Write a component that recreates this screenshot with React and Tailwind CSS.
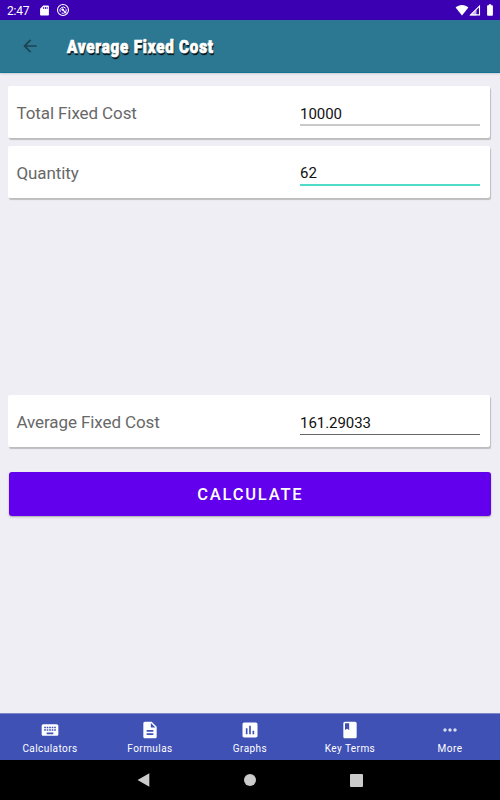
import React, { useState } from 'react';
import {
  MdKeyboard,
  MdDescription,
  MdAssessment,
  MdBook,
  MdMoreHoriz,
  MdArrowBack,
  MdBatteryFull,
} from 'react-icons/md';

const StatusBar = () => (
  <div className="flex h-5 shrink-0 items-center bg-[#3a00b2] pl-[7px] pr-[3px] text-white">
    <span className="w-[33px] pt-px text-[12px] leading-5 tracking-[-0.2px]">2:47</span>
    <svg viewBox="0 0 10 12" className="h-[11px] w-[9px]" fill="currentColor">
      <path
        fillRule="evenodd"
        d="M3.600.5H9a.9.9 0 0 1 .9.900V10.600a.9.9 0 0 1-.9.900H1a.9.9 0 0 1-.9-.900V4zM3.600 2.200V4.200H4.600V2.200zM5.500 2.200V4.200H6.500V2.200zM7.400 2.200V4.200H8.400V2.200z"
      />
    </svg>
    <svg viewBox="0 0 14 14" className="ml-[7px] h-[14px] w-[14px]" fill="none" stroke="currentColor">
      <circle cx="7" cy="7" r="5.5" strokeWidth="1.1" />
      <path d="M4.300 8.900A3.300 3.300 0 0 1 9.700 5.200M10.200 6.300A3.300 3.300 0 0 1 5.600 10" strokeWidth="1" />
      <path d="M6 6L10.400 10.400" strokeWidth="1.3" />
      <circle cx="6.7" cy="6.6" r="1.2" fill="currentColor" stroke="none" />
    </svg>
    <div className="ml-auto flex items-center">
      <svg viewBox="0 0 14 12" className="h-3 w-[14px]" fill="currentColor">
        <path d="M7 11.500L.6 3.600C2.300 2 4.500 1 7 1s4.700 1 6.400 2.600z" />
      </svg>
      <svg viewBox="0 0 12 12" className="h-3 w-3" fill="none" stroke="currentColor">
        <path d="M1.600 10.900L10.500 2V10.900z" strokeWidth="1.100" />
        <path d="M1 11.400L7.500 4.900V11.400z" fill="currentColor" stroke="none" opacity=".7" />
      </svg>
      <MdBatteryFull className="ml-[2px] h-[14px] w-[14px]" />
    </div>
  </div>
);

const Header = ({ title }) => (
  <header className="flex h-[53px] shrink-0 items-center border-b border-[#147394] bg-[#2c7892] pl-5 shadow-[0_1px_2px_rgba(0,0,0,0.15)]">
    <MdArrowBack className="h-5 w-5 text-[#1d4351]" />
    <h1 className="ml-[27px] origin-left scale-x-[0.865] whitespace-nowrap pt-[2px] text-[17.5px] font-black leading-6 tracking-[0.93px] text-white [-webkit-text-stroke:0.7px_white] [text-shadow:1px_1px_0_#102a33,1px_2px_1px_#000]">
      {title}
    </h1>
  </header>
);

const Field = ({ label, value, onChange, readOnly, lineClass }) => (
  <div className="flex h-[52px] items-start rounded-[2px] bg-white pl-[8.5px] pr-[10px] shadow-[1px_2px_1px_#bdbdbf]">
    <label className="w-[283.5px] pt-[15px] text-[17px] leading-6 tracking-[-0.1px] text-[#686868]">{label}</label>
    <input
      value={value}
      onChange={onChange}
      readOnly={readOnly}
      className={`mt-[15px] h-[25px] w-[180px] bg-transparent pt-[2px] text-[15px] tracking-[-0.05px] text-[#111] outline-none ${lineClass}`}
    />
  </div>
);

const tabs = [
  { label: 'Calculators', Icon: MdKeyboard },
  { label: 'Formulas', Icon: MdDescription },
  { label: 'Graphs', Icon: MdAssessment },
  { label: 'Key Terms', Icon: MdBook },
  { label: 'More', Icon: MdMoreHoriz },
];

const BottomTabs = () => (
  <nav className="flex h-[47px] shrink-0 border-t border-[#7f87cb] bg-[#3f51b5]">
    {tabs.map(({ label, Icon }) => (
      <button key={label} className="flex flex-1 flex-col items-center pt-[6px] text-white">
        <Icon className={label === 'More' ? 'h-5 w-5 opacity-80' : 'h-5 w-5'} />
        <span className="mt-[2px] text-[10px] leading-[14px] tracking-[0.43px]">{label}</span>
      </button>
    ))}
  </nav>
);

const SystemNav = () => (
  <div className="flex h-10 shrink-0 items-center justify-center gap-[94px] bg-black text-[#cbcbcb]">
    <svg viewBox="0 0 13 14" className="h-[14px] w-[13px]" fill="currentColor">
      <path d="M12.300.3V13.700L.5 7z" />
    </svg>
    <div className="h-3 w-3 rounded-full bg-current" />
    <div className="h-[13px] w-[13px] rounded-[1px] bg-current" />
  </div>
);

const App = () => {
  const [fixedCost, setFixedCost] = useState('10000');
  const [quantity, setQuantity] = useState('62');
  const [result, setResult] = useState('161.29033');

  const handleCalculate = () => {
    const value = parseFloat(fixedCost) / parseFloat(quantity);
    setResult(Number.isFinite(value) ? value.toFixed(5) : '');
  };

  return (
    <div className="flex h-[800px] w-[500px] flex-col overflow-hidden bg-[#efeef4] font-[Roboto,sans-serif]">
      <StatusBar />
      <Header title="Average Fixed Cost" />
      <main className="flex flex-1 flex-col pl-2 pr-[10px] pt-[13px]">
        <Field
          label="Total Fixed Cost"
          value={fixedCost}
          onChange={(e) => setFixedCost(e.target.value)}
          lineClass="border-b-2 border-[#c9c9c9]"
        />
        <div className="mt-[7.5px]">
          <Field
            label="Quantity"
            value={quantity}
            onChange={(e) => setQuantity(e.target.value)}
            lineClass="border-b-2 border-[#4fdcc8]"
          />
        </div>
        <div className="mt-[197.5px]">
          <Field label="Average Fixed Cost" value={result} readOnly lineClass="border-b border-[#666]" />
        </div>
        <button
          onClick={handleCalculate}
          className="-mr-[1px] ml-[0.5px] mt-[25px] h-[44px] rounded-[3px] bg-[#6200ee] pl-[1px] pt-[2px] text-[16.5px] font-medium tracking-[1.8px] text-white shadow-[0_1px_2px_rgba(0,0,0,0.3)]"
        >
          CALCULATE
        </button>
      </main>
      <BottomTabs />
      <SystemNav />
    </div>
  );
};

export default App;
